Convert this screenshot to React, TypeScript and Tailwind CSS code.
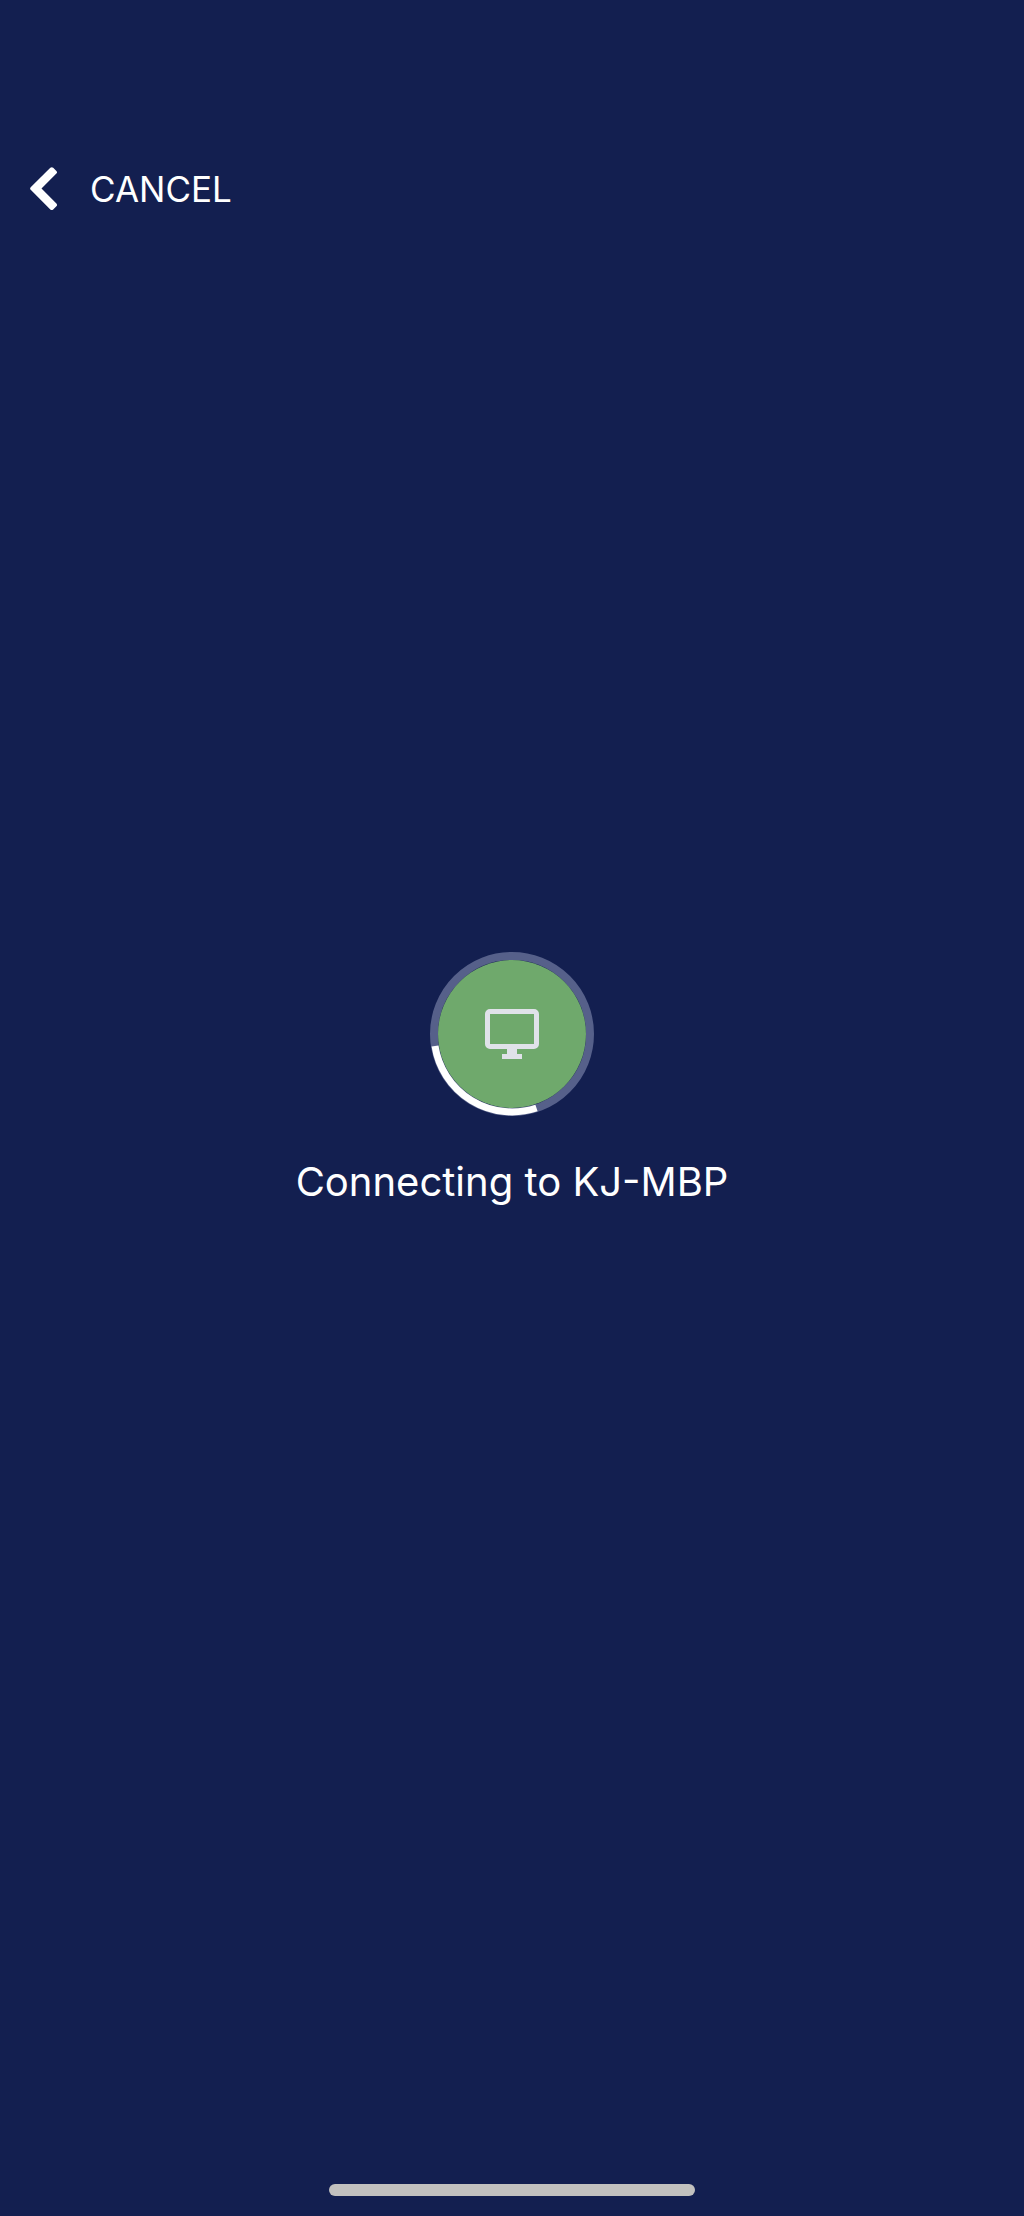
function ChevronIcon() {
  return (
    <svg width="28" height="44" viewBox="0 0 28 44" fill="none" aria-hidden="true">
      <path
        d="M.7 20.2 20.3.8Q21.8-.4 23.2.8L26.4 4Q27.7 5.3 26.4 6.6L11.5 21.5 26.4 36.6Q27.7 37.9 26.4 39.2L23.2 42.4Q21.8 43.6 20.3 42.4L.7 22.8Q-.5 21.5.7 20.2z"
        fill="#fff"
      />
    </svg>
  );
}

function ConnectionSpinner() {
  return (
    <svg width="164" height="164" viewBox="-82 -82 164 164" fill="none" role="img" aria-label="Connecting">
      <circle r="78" stroke="#56608a" strokeWidth="8" />
      <circle r="74" fill="#6fa96c" />
      <path d="M-77 12A78 78 0 0 0 24.5 74" stroke="#fff" strokeWidth="7" />
      <rect x="-24.5" y="-22.5" width="49" height="35" rx="2.5" stroke="#e0e2e9" strokeWidth="5" />
      <path d="M-5 15H5v5h5v5h-20v-5h5z" fill="#e0e2e9" />
    </svg>
  );
}

export default function App() {
  return (
    <div className="flex min-h-screen flex-col bg-[#131f50] font-['Inter',sans-serif] text-white">
      <header className="px-[30px] pt-[161px]">
        <button type="button" className="flex items-center gap-8 text-[35px] leading-[56px]">
          <ChevronIcon />
          <span>CANCEL</span>
        </button>
      </header>
      <main className="flex flex-1 flex-col items-center justify-center gap-[38px] pb-[240px]">
        <ConnectionSpinner />
        <p className="text-[40px] leading-[56px]" role="status">
          Connecting to KJ-MBP
        </p>
      </main>
      <footer className="flex justify-center pb-5">
        <div className="h-3 w-[366px] rounded-full bg-[#c2c1bf]" />
      </footer>
    </div>
  );
}
